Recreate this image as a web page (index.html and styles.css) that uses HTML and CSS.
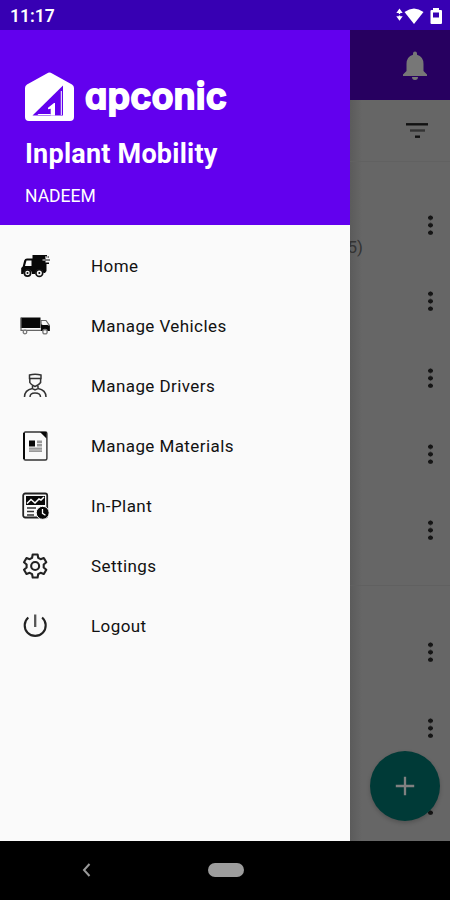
FILE: index.html
```
<!DOCTYPE html>
<html lang="en">
<head>
<meta charset="utf-8">
<title>Inplant Mobility</title>
<link rel="stylesheet" href="styles.css">
</head>
<body>
<div class="screen">
  <header class="status">
    <span class="clock">11:17</span>
    <svg class="status-icons" width="46" height="18" viewBox="0 0 46 18">
      <path d="M3.500 1.500 6.700 6H.3zM3.500 13.800.3 9.300h6.400zM2.800 5h1.400v2H2.800zM2.800 8.500h1.400v2H2.800z"/>
      <path d="M8.500 5Q18 -2 27.500 5L18 17z"/>
      <path d="M37 1h6v2h2q1 0 1 1v12q0 1-1 1H35.500q-1 0-1-1V4q0-1 1-1H37z"/>
      <path class="battery-gap" d="M37 5.500h6v5h-6z"/>
    </svg>
  </header>
  <div class="body">
    <aside class="drawer">
      <div class="hero">
        <div class="brand">
          <svg width="50" height="50" viewBox="0 0 50 50">
            <path class="white" d="M23.200 .8Q24.500 0 25.800 .8L47 12.500Q49 13.700 49 16V45Q49 49 45 49H4Q0 49 0 45V16Q0 13.700 2 12.500z"/>
            <path class="violet" d="M38 13.500V43.500H7.500z"/>
            <path class="white" d="M30 31V43.500H25.700V36.800L23 37.200V35.700L29 31z"/>
            <path class="white" d="M13.500 42H25.800V43.100H12.400zM35.800 19h1v24h-1z"/>
          </svg>
          <span class="wordmark">apconic</span>
        </div>
        <div class="app-name">Inplant Mobility</div>
        <div class="user">NADEEM</div>
      </div>
      <nav class="menu">
        <a class="item"><svg viewBox="0 0 30 30">
          <path d="M12.500 4H27v1.500h2v1h-3.500v2H30v1h-4.500v2H29v1.500h-2.500V20l-1.500 2h-1.500Q22 17.500 18 19Q15.500 20.500 15 23H12Q12 19 8 18.500Q4 18.500 3.500 23H1.200V17l1.500-1.500 1.500-6Q5 7.500 7 7.500h5.500z"/>
          <path class="paper" d="M6.500 9.500h5v5.500H5z"/>
          <path class="paper" d="M25 5.500h3v1h-3zM22.500 8.500h3v1h-3z"/>
          <circle class="wheel" cx="7.500" cy="22" r="3.100"/><circle class="wheel" cx="19.300" cy="22" r="3.400"/>
          <circle cx="7.500" cy="22" r="1"/><circle cx="19.300" cy="22" r="1"/>
        </svg><span>Home</span></a>
        <a class="item"><svg viewBox="0 0 30 30">
          <path d="M.7 6.500h19.800V17H.7z"/><path class="grayline" d="M1 6.800v12.500h27M21 9.500h5l3.500 5v5h-8z"/>
          <path d="M21 13.500h5.500l3.200 1.500V20h-8.700z"/><path class="paper" d="M22.300 10.700h3l2 3.300h-5z"/>
          <circle class="tire" cx="5" cy="21" r="1.800"/><circle class="tire" cx="25" cy="20.700" r="2.200"/>
        </svg><span>Manage Vehicles</span></a>
        <a class="item"><svg viewBox="0 0 30 30">
          <path class="thin" d="M9.500 4Q15 2.300 21 4V7.500H9.500zM9.800 8v3.500Q11 14 15 15.500Q19 14 20.600 11.500V8M12.500 14v3.500M18 14v3.500M4.500 26Q4.500 19 12.500 17.500L15 19 18 17.500Q26 19 26 26M10 26Q10 22 15 22Q20.500 22 20.500 26"/>
        </svg><span>Manage Drivers</span></a>
        <a class="item"><svg viewBox="0 0 30 30">
          <rect class="page" x="3.900" y="1" width="23" height="28" rx="1.500"/><path d="M20 1h6.500v6.500zM3 2h2v26H3z"/>
          <path d="M9 9.500h6v6H9z"/><path class="gray" d="M17 9.500h5v6h-5zM9 16.500h13v4.500H9z"/><path class="paper" d="M17 12h5v.7h-5zM9 18.800h13v.5H9z"/>
        </svg><span>Manage Materials</span></a>
        <a class="item"><svg viewBox="0 0 30 30">
          <rect class="report" x="3.200" y="2.500" width="24" height="24" rx="2"/><path d="M6 5h19v9H6z"/>
          <path class="trend" d="M7 12.500 11 8.500l4 3.500 4-4 2 1 3-3"/><path class="line" d="M7 17h9M7 20.500h7M7 24h7"/>
          <circle class="clockface" cx="22.700" cy="21.800" r="6.500"/><path class="hands" d="M22.500 18V22.300l3 2"/>
        </svg><span>In-Plant</span></a>
        <a class="item"><svg viewBox="0 0 30 30">
          <path class="gear" d="m12.700 3.500-.6 3.300-2.400 1.400-3.200-1.200-2.500 4.300 2.600 2.200v3L4 18.700 6.500 23l3.200-1.200 2.400 1.400.6 3.300h4.900l.6-3.300 2.400-1.400 3.200 1.200 2.500-4.300-2.600-2.200v-3l2.600-2.200L23.800 7l-3.200 1.200-2.400-1.400-.6-3.300z"/><circle class="gear" cx="15.150" cy="15" r="4"/>
        </svg><span>Settings</span></a>
        <a class="item"><svg viewBox="0 0 30 30">
          <path class="power" d="M8.300 6.500A10.500 10.500 0 1 0 22.100 6.500"/><path class="power-bar" d="M15.200 3.500V16"/>
        </svg><span>Logout</span></a>
      </nav>
    </aside>
    <main class="content">
      <div class="appbar"><svg width="26" height="30" viewBox="0 0 26 30"><path d="M13 .5q2 0 2 2v1.200q6.500 1.800 6.500 9.300V20l3.500 3.500V25H1v-1.500L4.500 20v-7q0-7.500 6.500-9.300V2.500q0-2 2-2zM10 26h6q0 3-3 3t-3-3z"/></svg></div>
      <div class="filter"><svg width="22" height="16" viewBox="0 0 22 16"><path class="f1" d="M0 1.300h22"/><path class="f2" d="M4 7.500h15"/><path class="f1" d="M9 13.700h5"/></svg></div>
      <section class="group">
        <div class="row"><span class="count">5)</span><i class="dots"></i></div>
        <div class="row"><i class="dots"></i></div>
        <div class="row"><i class="dots"></i></div>
        <div class="row"><i class="dots"></i></div>
        <div class="row"><i class="dots"></i></div>
      </section>
      <section class="group">
        <div class="row"><i class="dots"></i></div>
        <div class="row"><i class="dots"></i></div>
        <div class="row"><i class="dots"></i></div>
      </section>
      <div class="fab"><svg width="20" height="20" viewBox="0 0 20 20"><path d="M10 .8v18.400M.8 10h18.400"/></svg></div>
    </main>
  </div>
  <footer class="navbar">
    <svg width="9" height="14" viewBox="0 0 9 14"><path d="M7.500 1 2 7l5.500 6"/></svg>
    <span class="pill"></span>
  </footer>
</div>
</body>
</html>
```

FILE: styles.css
```
* { box-sizing: border-box; }
body { margin: 0; font-family: Roboto, sans-serif; }
.screen { width: 450px; height: 900px; display: flex; flex-direction: column; overflow: hidden; background: #000; }
.status { height: 30px; flex: none; display: flex; align-items: center; justify-content: space-between; padding: 2px 8px 0 10px; background: #3700b3; color: #fff; }
.clock { font-size: 17.5px; font-weight: 600; }
.status-icons { fill: #fff; }
.status-icons .battery-gap { fill: #3700b3; }
.body { height: 810.5px; flex: none; display: flex; }
.drawer { width: 350.4px; flex: none; background: #fafafa; }
.hero { height: 195px; padding: 41.5px 0 0 25px; background: #6200ee; color: #fff; }
.brand { display: flex; height: 50px; }
.brand svg { flex: none; }
.white { fill: #fff; }
.violet { fill: #6200ee; }
.wordmark { margin-left: 10px; font: 600 35.5px/50px Inter, sans-serif; font-feature-settings: "cv11", "ss03"; letter-spacing: .55px; -webkit-text-stroke: 2px #fff; stroke-linejoin: round; }
.app-name { margin-top: 14.5px; font-size: 27px; line-height: 36px; font-weight: 700; letter-spacing: .22px; white-space: nowrap; }
.user { margin-top: 12px; font-size: 17.5px; line-height: 24px; font-weight: 450; }
.menu { padding-top: 11px; }
.item { height: 60px; display: flex; align-items: center; gap: 41px; padding-left: 20px; color: #111; font-size: 17px; font-weight: 430; letter-spacing: .42px; }
.item svg { width: 30px; height: 30px; flex: none; fill: #080808; }
.item svg .paper { fill: #fafafa; }
.item svg .gray { fill: #999; }
.item svg .wheel { fill: #fafafa; stroke: #111; stroke-width: 1.7; }
.item svg .tire { fill: #fafafa; stroke: #777; stroke-width: 1.3; }
.item svg .grayline { fill: none; stroke: #666; stroke-width: 1.2; }
.item svg .thin { fill: none; stroke: #333; stroke-width: 1.5; }
.item svg .page { fill: #fafafa; stroke: #333; stroke-width: 1.4; }
.item svg .report { fill: #fafafa; stroke: #222; stroke-width: 1.8; }
.item svg .trend { fill: none; stroke: #fff; stroke-width: 1.5; }
.item svg .line { fill: none; stroke: #333; stroke-width: 1.4; }
.item svg .clockface { stroke: #fafafa; stroke-width: 1; }
.item svg .hands { fill: none; stroke: #fff; stroke-width: 1.3; }
.item svg .gear { fill: none; stroke: #222; stroke-width: 2.1; stroke-linejoin: round; }
.item svg .power { fill: none; stroke: #222; stroke-width: 2.1; }
.item svg .power-bar { fill: none; stroke: #555; stroke-width: 2.3; }
.content { position: relative; flex: 1; overflow: hidden; background: linear-gradient(90deg, #5b5b5b, #666 12px); }
.appbar { height: 70px; display: flex; align-items: center; justify-content: flex-end; padding: 2px 22px 0 0; background: #270060; }
.appbar svg { fill: #777; }
.filter { height: 62px; display: flex; align-items: center; justify-content: flex-end; padding-right: 22px; border-bottom: 1px solid #616161; }
.filter svg { fill: none; stroke-width: 2.4; }
.f1 { stroke: #111; }
.f2 { stroke: #333; }
.group { height: 424px; padding-top: 25px; border-bottom: 1px solid #606060; }
.group + .group { height: 254px; padding-top: 28px; border: 0; overflow: hidden; }
.row { height: 76.3px; display: flex; align-items: center; justify-content: flex-end; padding-right: 17px; }
.count { margin: 43px auto 0 -3px; font-size: 17px; color: #333; }
.dots { width: 5px; height: 20px; background: radial-gradient(circle, #151515 2.1px, transparent 2.6px) 0 -1px / 5px 7.5px; }
.fab { position: absolute; right: 10px; bottom: 20px; width: 70px; height: 70px; border-radius: 50%; display: grid; place-items: center; background: #003a37; box-shadow: 0 2px 4px #0003; }
.fab svg { fill: none; stroke: #808080; stroke-width: 2.3; }
.navbar { flex: 1; display: flex; align-items: center; padding-left: 82px; background: #000; }
.navbar svg { fill: none; stroke: #999; stroke-width: 2; }
.pill { margin-left: 116.5px; width: 36px; height: 14px; border-radius: 7px; background: #9c9c9c; }
```
